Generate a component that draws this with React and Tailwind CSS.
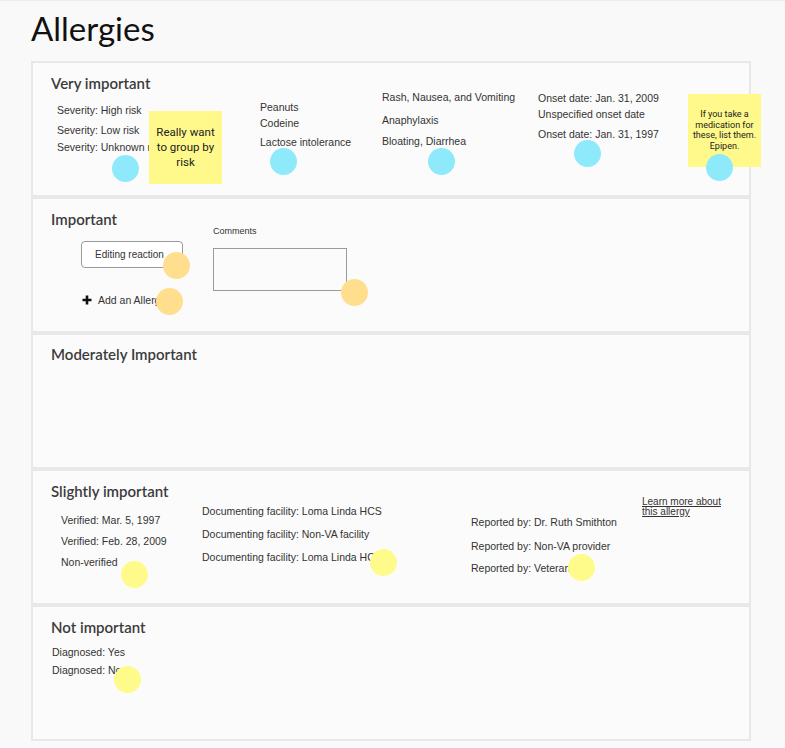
import React from 'react'

const HAND = { fontFamily: '"Liberation Sans", Arial, sans-serif' }
const HEAD = { fontFamily: 'Lato, "Open Sans", sans-serif' }

// Dots and sticky notes pinned over the wireframe (page coordinates)
const DOTS = [
  { x: 125, y: 167, c: 'bg-[#8eeafb]' },
  { x: 283, y: 160, c: 'bg-[#8eeafb]' },
  { x: 441, y: 160, c: 'bg-[#8eeafb]' },
  { x: 587, y: 152, c: 'bg-[#8eeafb]' },
  { x: 719, y: 166, c: 'bg-[#8eeafb]' },
  { x: 176, y: 264, c: 'bg-[#ffdf8e]' },
  { x: 169, y: 300, c: 'bg-[#ffdf8e]' },
  { x: 354, y: 291, c: 'bg-[#ffdf8e]' },
  { x: 134, y: 573, c: 'bg-[#fffb8a]' },
  { x: 383, y: 561, c: 'bg-[#fffb8a]' },
  { x: 581, y: 566, c: 'bg-[#fffb8a]' },
  { x: 127, y: 678, c: 'bg-[#fffb8a]' },
]

function Line({ children, className = '' }) {
  return (
    <div className={`text-[10.5px] leading-[12px] text-[#333] whitespace-nowrap ${className}`} style={HAND}>
      {children}
    </div>
  )
}

function Panel({ title, children, pt = 'pt-[13px]' }) {
  return (
    <section className={`h-[136px] border-2 border-[#e8e8e8] bg-[#fbfbfb] pl-[18px] ${pt}`}>
      <h2 className="text-[15px] leading-[14px] font-semibold text-[#3b3b3b]" style={HEAD}>
        {title}
      </h2>
      {children}
    </section>
  )
}

export default function App() {
  return (
    <div className="relative w-[785px] h-[748px] bg-[#f9f9f9] border-t border-[#ececec] overflow-hidden">
      <h1 className="ml-[31px] pt-[8px] text-[33px] leading-[38px] text-[#111]" style={HEAD}>
        Allergies
      </h1>

      <div className="ml-[31px] mt-[14px] w-[720px] flex flex-col">
        {/* ── Very important ── */}
        <Panel title="Very important">
          <div className="flex">
            <div className="ml-[6px] w-[203px]">
              <Line className="mt-[14px]">Severity: High risk</Line>
              <Line className="mt-[8px]">Severity: Low risk</Line>
              <Line className="mt-[5px]">Severity: Unknown risk</Line>
            </div>
            <div className="w-[122px]">
              <Line className="mt-[11px]">Peanuts</Line>
              <Line className="mt-[4px]">Codeine</Line>
              <Line className="mt-[7px]">Lactose intolerance</Line>
            </div>
            <div className="w-[156px]">
              <Line className="mt-[1px]">Rash, Nausea, and Vomiting</Line>
              <Line className="mt-[11px]">Anaphylaxis</Line>
              <Line className="mt-[9px]">Bloating, Diarrhea</Line>
            </div>
            <div>
              <Line className="mt-[2px]">Onset date: Jan. 31, 2009</Line>
              <Line className="mt-[4px]">Unspecified onset date</Line>
              <Line className="mt-[8px]">Onset date: Jan. 31, 1997</Line>
            </div>
          </div>
        </Panel>

        {/* ── Important ── */}
        <Panel title="Important">
          <div className="flex">
            <div className="ml-[30px] w-[132px]">
              <button
                className="mt-[15px] w-[102px] h-[27px] rounded-[4px] border border-[#9a9a9a] bg-white pl-[13px] text-left text-[10px] text-[#333] whitespace-nowrap overflow-hidden"
                style={HAND}
              >
                Editing reaction
              </button>
              <div className="mt-[26px] flex items-center gap-[6px] ml-[1px]">
                <svg width="10" height="10" viewBox="0 0 10 10">
                  <path d="M5 0.5v9M0.5 5h9" stroke="#111" strokeWidth="2.6" />
                </svg>
                <Line>Add an Allergy</Line>
              </div>
            </div>
            <div>
              <div className="mt-[0px] text-[9px] leading-[10px] text-[#333]" style={HAND}>Comments</div>
              <div className="mt-[12px] w-[134px] h-[43px] border border-[#9a9a9a] bg-[#fbfbfb]" />
            </div>
          </div>
        </Panel>

        {/* ── Moderately Important ── */}
        <Panel title="Moderately Important" pt="pt-[12px]" />

        {/* ── Slightly important ── */}
        <Panel title="Slightly important">
          <div className="flex">
            <div className="ml-[10px] w-[141px]">
              <Line className="mt-[16px]">Verified: Mar. 5, 1997</Line>
              <Line className="mt-[9px]">Verified: Feb. 28, 2009</Line>
              <Line className="mt-[9px]">Non-verified</Line>
            </div>
            <div className="w-[269px]">
              <Line className="mt-[7px]">Documenting facility: Loma Linda HCS</Line>
              <Line className="mt-[11px]">Documenting facility: Non-VA facility</Line>
              <Line className="mt-[11px]">Documenting facility: Loma Linda HCS</Line>
            </div>
            <div className="w-[171px]">
              <Line className="mt-[18px]">Reported by: Dr. Ruth Smithton</Line>
              <Line className="mt-[12px]">Reported by: Non-VA provider</Line>
              <Line className="mt-[10px]">Reported by: Veteran</Line>
            </div>
            <a className="-mt-[1px] w-[84px] text-[10px] leading-[10px] text-[#333] underline" style={HAND}>
              Learn more about this allergy
            </a>
          </div>
        </Panel>

        {/* ── Not important ── */}
        <Panel title="Not important">
          <div className="ml-[1px]">
            <Line className="mt-[12px]">Diagnosed: Yes</Line>
            <Line className="mt-[6px]">Diagnosed: No</Line>
          </div>
        </Panel>
      </div>

      {/* ── Sticky notes ── */}
      <div
        className="absolute left-[149px] top-[110px] w-[73px] h-[73px] bg-[#fff98b] px-[4px] flex items-center justify-center text-center text-[11.5px] leading-[15px] text-[#222]"
        style={{ fontFamily: 'Roboto, "Open Sans", sans-serif' }}
      >
        Really want to group by risk
      </div>
      <div
        className="absolute left-[688px] top-[93px] w-[73px] h-[73px] bg-[#fff98b] pt-[15px] px-[2px] text-center text-[9px] leading-[10.7px] text-[#222]"
        style={{ fontFamily: 'Roboto, "Open Sans", sans-serif' }}
      >
        If you take a medication for these, list them. Epipen.
      </div>

      {/* ── Annotation dots ── */}
      {DOTS.map((d, i) => (
        <div
          key={i}
          className={`absolute w-[27px] h-[27px] rounded-full ${d.c}`}
          style={{ left: d.x - 13.5, top: d.y - 13.5 }}
        />
      ))}
    </div>
  )
}
